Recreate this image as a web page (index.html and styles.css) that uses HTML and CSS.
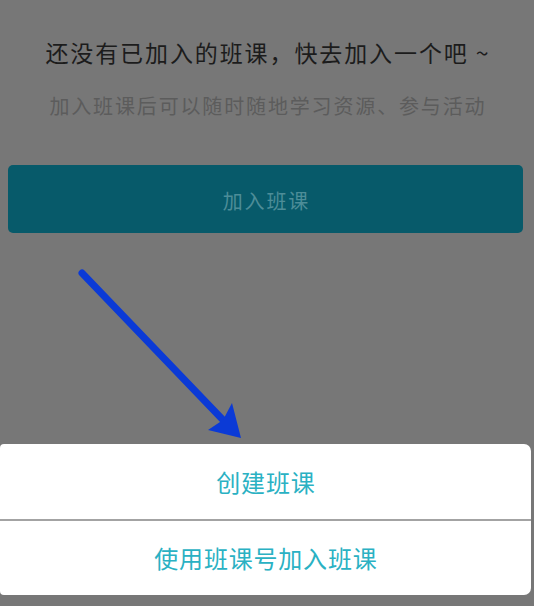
FILE: index.html
```html
<!DOCTYPE html>
<html lang="zh">
<head>
<meta charset="utf-8">
<title>班课</title>
<link rel="stylesheet" href="styles.css">
</head>
<body>
<div class="page">
  <main class="empty">
    <h1 class="title">还没有已加入的班课，快去加入一个吧 ~</h1>
    <p class="subtitle">加入班课后可以随时随地学习资源、参与活动</p>
    <div class="join-btn"><span>加入班课</span></div>
  </main>

  <svg class="arrow" width="534" height="606" viewBox="0 0 534 606" aria-hidden="true">
    <line x1="82" y1="273" x2="224" y2="421" stroke="#0b3ad6" stroke-width="7" stroke-linecap="round"/>
    <polygon points="241,438 208,430 223,420 232,403" fill="#0b3ad6"/>
  </svg>

  <div class="sheet">
    <div class="sheet-item"><span>创建班课</span></div>
    <div class="sheet-divider"></div>
    <div class="sheet-item"><span>使用班课号加入班课</span></div>
  </div>
</div>
</body>
</html>
```

FILE: styles.css
```css
* { box-sizing: border-box; }
html, body {
  margin: 0;
  padding: 0;
  background: #777777;
}
body {
  font-family: "Noto Sans CJK SC", "Noto Sans", sans-serif;
}
.page {
  position: relative;
  width: 534px;
  height: 606px;
  overflow: hidden;
  background: #777777;
}
.empty {
  display: flex;
  flex-direction: column;
  align-items: center;
  padding-top: 36px;
}
.title {
  margin: 0;
  font-size: 23px;
  font-weight: 400;
  line-height: 32px;
  letter-spacing: 1.9px;
  padding-left: 1.9px;
  color: #1c1c1c;
}
.subtitle {
  margin: 24px 0 0;
  font-size: 20px;
  line-height: 28px;
  letter-spacing: 1.85px;
  padding-left: 1.85px;
  color: #5c5c5c;
}
.join-btn {
  margin: 45px 11px 0 8px;
  align-self: stretch;
  height: 68px;
  border-radius: 5px;
  background: #075a6a;
  display: flex;
  align-items: center;
  justify-content: center;
  padding-top: 2px;
}
.join-btn span {
  font-size: 20px;
  letter-spacing: 1.8px;
  padding-left: 1.8px;
  color: #4d8d98;
}
.arrow {
  position: absolute;
  left: 0;
  top: 0;
}
.sheet {
  position: absolute;
  left: 0;
  top: 444px;
  width: 531px;
  height: 151px;
  background: #ffffff;
  border-radius: 4px 7px 7px 4px;
  display: flex;
  flex-direction: column;
}
.sheet-item {
  flex: 1;
  display: flex;
  align-items: center;
  justify-content: center;
}
.sheet-item span {
  font-size: 24px;
  letter-spacing: 0.8px;
  padding-left: 0.8px;
  color: #2ab1c3;
}
.sheet-divider {
  height: 2px;
  background: #a3a3a3;
}
```
